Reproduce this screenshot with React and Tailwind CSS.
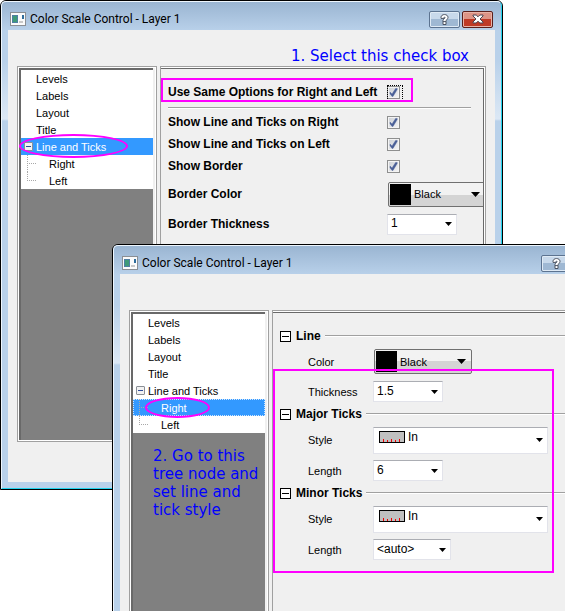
import React, { useId } from "react";

const TEXT = "font-['Liberation_Sans',Arial,sans-serif]";

function AppIcon() {
  return (
    <svg width="16" height="14" viewBox="0 0 16 14" shapeRendering="crispEdges" aria-hidden="true">
      <rect width="16" height="14" fill="#8b8f94" />
      <rect x="1" y="1" width="14" height="12" fill="#fbfbfb" />
      <rect x="2" y="3" width="6" height="8" fill="#4f7fa3" />
      <rect x="3" y="4" width="4" height="6" fill="#3f9a78" />
      <rect x="12" y="3" width="2" height="4" fill="#2f6d9c" />
      <rect x="9" y="9" width="4" height="2" fill="#c9c9c9" />
    </svg>
  );
}

function TitleBar({ title }) {
  return (
    <header className="flex h-7 shrink-0 items-center pl-2 pr-2 pt-1.5">
      <AppIcon />
      <h1 className="ml-1 flex-1 whitespace-nowrap font-['Roboto',sans-serif] text-[12px] leading-4 text-black">
        {title}
      </h1>
      <div className="flex gap-0.5">
        <button
          type="button"
          aria-label="Help"
          className="flex h-[17px] w-[31px] items-center justify-center rounded-xs border border-[#5c7390] bg-linear-to-b from-[#c8d9eb] from-50% to-[#9fb8d3] to-50% shadow-[inset_0_0_0_1px_#dfeaf5]"
        >
          <svg width="9" height="11" viewBox="0 0 9 11" aria-hidden="true">
            <path d="M1 3.4C1 -0.4 8 -0.4 8 3.4C8 5.2 6 5.6 6 7.4V10.5H3V6.4C3 5.4 5 4.6 5 3.6C5 2.8 4 2.8 4 4.4H1Z" fill="#fff" stroke="#4b5260" />
            <path d="M3 7.6H6" stroke="#4b5260" />
          </svg>
        </button>
        <button
          type="button"
          aria-label="Close"
          className="flex h-[17px] w-[31px] items-center justify-center rounded-xs border border-[#5a1f1b] bg-linear-to-b from-[#dd9486] from-50% to-[#bf3a26] to-50% shadow-[inset_0_0_0_1px_#e8b3a8]"
        >
          <svg width="12" height="10" viewBox="0 0 12 10" aria-hidden="true">
            <path d="M1 1H4.2L6 2.8L7.8 1H11V2L8 5L11 8V9H7.8L6 7.2L4.2 9H1V8L4 5L1 2Z" fill="#fff" stroke="#4b4350" />
          </svg>
        </button>
      </div>
    </header>
  );
}

function TreeItem({ label, selected = false, focused = false, child = false, last = false, expandable = false }) {
  return (
    <li className={`flex h-[17px] items-center ${selected ? "bg-[#3399ff] text-white" : "text-black"} ${focused ? "outline-1 -outline-offset-1 outline-dotted outline-[#cfe6ff]" : ""}`}>
      <span className={`flex h-full shrink-0 items-center ${child ? "w-7 pl-1.5" : "w-[15px] pl-[3px]"}`}>
        {expandable && (
          <button type="button" aria-label="Collapse" className="flex size-[9px] items-center justify-center rounded-[1px] border border-[#8a8f96] bg-[#f2f2f2]">
            <span className="h-px w-[5px] bg-[#2c4a9a]" />
          </button>
        )}
        {child && (
          <svg width="10" height="17" viewBox="0 0 10 17" aria-hidden="true">
            <path d={last ? "M0.5 0V9M2 8.5H9" : "M0.5 0V17M2 8.5H9"} stroke="#a8a8a8" strokeDasharray="1 1" />
          </svg>
        )}
      </span>
      <button type="button" className="whitespace-nowrap pt-px text-[11px] leading-4">{label}</button>
    </li>
  );
}

function TreePanel({ selected, ring, children }) {
  return (
    <nav aria-label="Pages" className="flex w-[140px] shrink-0 border border-[#a0a0a0] bg-white p-px">
      <div className="relative flex-1 border-l-2 border-t-2 border-[#696969] bg-[#808080]">
        <ul className="bg-white">
          <TreeItem label="Levels" />
          <TreeItem label="Labels" />
          <TreeItem label="Layout" />
          <TreeItem label="Title" />
          <TreeItem label="Line and Ticks" expandable selected={selected === "Line and Ticks"} />
          <TreeItem label="Right" child selected={selected === "Right"} focused={selected === "Right"} />
          <TreeItem label="Left" child last />
        </ul>
        <span className={`pointer-events-none absolute rounded-[50%] border-2 border-[#ff00ff] ${ring}`} />
        {children}
      </div>
      <div className="w-0.5 bg-[#f0f0f0]" />
    </nav>
  );
}

function Dialog({ title, place, note, tree, children }) {
  return (
    <section
      aria-label={title}
      className={`absolute flex h-[490px] w-[503px] flex-col rounded-t-md border border-black ${place} bg-[linear-gradient(to_bottom,#99b4d1,#b9d1ea_30px,#b9d1ea_60px,#dce8f5_118px,#b9d1ea_120px)]`}
    >
      <div className="flex min-h-0 flex-1 flex-col rounded-t-[5px] border border-b-[#22d3ee] border-l-[#eef6fd] border-r-[#22d3ee] border-t-[#eef6fd]">
        <TitleBar title={title} />
        <div className="mx-1.5 mb-1.5 flex min-h-0 flex-1 flex-col bg-[#f0f0f0] px-[9px] pb-10">
          <p className="flex h-9 shrink-0 items-end justify-end pb-px pr-[17px] font-['DejaVu_Sans',Verdana,sans-serif] text-[15px] leading-[18px] text-[#0000ff]">
            {note}
          </p>
          <div className="flex min-h-0 flex-1 gap-[3px]">
            {tree}
            <div className="min-w-0 flex-1 border border-[#a0a0a0] bg-white p-px pl-0">
              <div className="relative h-full overflow-hidden border-r border-t border-[#696969] bg-[#f0f0f0]">
                {children}
              </div>
            </div>
          </div>
        </div>
      </div>
    </section>
  );
}

function Arrow({ wide = false }) {
  return wide ? (
    <svg width="9" height="5" viewBox="0 0 9 5" aria-hidden="true" className="pointer-events-none"><path d="M0 0H9L4.5 5Z" /></svg>
  ) : (
    <svg width="7" height="4" viewBox="0 0 7 4" aria-hidden="true" className="pointer-events-none"><path d="M0 0H7L3.5 4Z" /></svg>
  );
}

function PlainSelect({ id, value, width }) {
  return (
    <span className={`grid h-[21px] items-center border border-[#e2e3ea] border-t-[#abadb3] bg-white ${width}`}>
      <select id={id} defaultValue={value} className="col-start-1 row-start-1 h-[19px] w-full appearance-none bg-transparent pb-0.5 pl-[3px] text-[12px] leading-4">
        <option>{value}</option>
      </select>
      <span className="pointer-events-none col-start-1 row-start-1 justify-self-end pr-1"><Arrow /></span>
    </span>
  );
}

function ColorSelect({ id }) {
  return (
    <span className="ml-px grid h-[25px] w-[98px] shrink-0 items-center rounded-xs border border-[#707070] bg-linear-to-b from-[#f2f2f2] from-50% to-[#d4d4d4] to-50%">
      <span className="pointer-events-none col-start-1 row-start-1 ml-px h-[21px] w-[21px] bg-black" />
      <select id={id} defaultValue="Black" className="col-start-1 row-start-1 h-[23px] w-full appearance-none bg-transparent pl-[25px] text-[11px] leading-4">
        <option>Black</option>
      </select>
      <span className="pointer-events-none col-start-1 row-start-1 justify-self-end pr-[5px]"><Arrow wide /></span>
    </span>
  );
}

function TickSelect({ id }) {
  return (
    <span className="grid h-[27px] w-[175px] items-center border border-[#e2e3ea] border-t-[#abadb3] bg-white">
      <svg width="26" height="12" viewBox="0 0 26 12" shapeRendering="crispEdges" aria-hidden="true" className="pointer-events-none col-start-1 row-start-1 mb-1.5 ml-[5px]">
        <rect width="26" height="12" fill="#000" />
        <rect x="1" y="1" width="24" height="10" fill="#c0c0c0" />
        <g fill="#f00000">
          <rect x="4" y="8" width="1" height="3" />
          <rect x="8" y="9" width="1" height="2" />
          <rect x="12" y="8" width="1" height="3" />
          <rect x="16" y="9" width="1" height="2" />
          <rect x="20" y="8" width="1" height="3" />
        </g>
      </svg>
      <select id={id} defaultValue="In" className="col-start-1 row-start-1 h-[25px] w-full appearance-none bg-transparent pb-1.5 pl-[34px] text-[12px] leading-4">
        <option>In</option>
      </select>
      <span className="pointer-events-none col-start-1 row-start-1 justify-self-end pr-1"><Arrow /></span>
    </span>
  );
}

function CheckRow({ label, height, focus = false }) {
  const id = useId();
  return (
    <div className={`flex items-center ${height}`}>
      <label htmlFor={id} className="w-[219px] whitespace-nowrap text-[12px] font-bold leading-4">{label}</label>
      <span className="relative grid size-[13px]">
        <input
          id={id}
          type="checkbox"
          defaultChecked
          className="peer col-start-1 row-start-1 size-[13px] appearance-none border border-[#8e8f8f] bg-linear-to-br from-[#cbcfd5] to-[#f6f6f6] shadow-[inset_0_0_0_1px_#f4f4f4]"
        />
        <svg width="13" height="13" viewBox="0 0 13 13" aria-hidden="true" className="pointer-events-none invisible col-start-1 row-start-1 peer-checked:visible">
          <path d="M3 6L5 8L8.6 2.4L10.2 2.4V3.6L6 10.4H5L3 7.8Z" fill="#4a5f97" stroke="#4a5f97" strokeWidth="0.4" />
        </svg>
        {focus && <span className="pointer-events-none absolute -top-px left-0 size-4 border border-dotted border-black" />}
      </span>
    </div>
  );
}

function SelectRow({ label, children }) {
  const id = useId();
  return (
    <div className="flex h-[30px] items-center">
      <label htmlFor={id} className="w-[219px] shrink-0 whitespace-nowrap text-[12px] font-bold leading-4">{label}</label>
      {children(id)}
    </div>
  );
}

function Group({ title, children }) {
  return (
    <section>
      <div className="flex h-[18px] items-center">
        <button type="button" aria-label={`Collapse ${title}`} className="flex size-[11px] shrink-0 items-center justify-center border border-black bg-white">
          <span className="h-px w-[7px] bg-black" />
        </button>
        <h2 className="ml-[5px] mr-1 whitespace-nowrap text-[12px] font-bold leading-4">{title}</h2>
        <div className="h-0.5 flex-1 border-t border-[#a0a0a0] bg-white" />
      </div>
      {children}
    </section>
  );
}

function Field({ label, height = "h-[27px]", children }) {
  const id = useId();
  return (
    <div className={`flex items-center pl-7 ${height}`}>
      <label htmlFor={id} className="w-[65px] shrink-0 text-[11px] leading-4">{label}</label>
      {children(id)}
    </div>
  );
}

export default function App() {
  return (
    <main className={`relative h-screen overflow-hidden bg-white text-black ${TEXT}`}>
      <Dialog
        title="Color Scale Control - Layer 1"
        place="left-0 top-0"
        note="1. Select this check box"
        tree={<TreePanel selected="Line and Ticks" ring="-left-0.5 top-[64px] h-6 w-[109px]" />}
      >
        <div className="pl-[7px] pt-3">
          <CheckRow label="Use Same Options for Right and Left" height="h-[22px]" focus />
          <div className="mb-0.5 mr-3 mt-1 h-0.5 border-t border-[#a0a0a0] bg-white" />
          <CheckRow label="Show Line and Ticks on Right" height="h-[22px]" />
          <CheckRow label="Show Line and Ticks on Left" height="h-[22px]" />
          <CheckRow label="Show Border" height="h-[22px]" />
          <div className="pt-0.5">
            <SelectRow label="Border Color">{(id) => <ColorSelect id={id} />}</SelectRow>
            <SelectRow label="Border Thickness">{(id) => <PlainSelect id={id} value="1" width="w-[70px]" />}</SelectRow>
          </div>
        </div>
        <span className="pointer-events-none absolute left-0 top-[9px] h-6 w-[252px] border-2 border-[#ff00ff]" />
      </Dialog>

      <Dialog
        title="Color Scale Control - Layer 1"
        place="left-28 top-[244px]"
        note=""
        tree={
          <TreePanel selected="Right" ring="left-3 top-[83px] h-[21px] w-[65px]">
            <p className="whitespace-nowrap pl-5 pt-3.5 font-['DejaVu_Sans',Verdana,sans-serif] text-[15px] leading-[18px] text-[#0000ff]">
              2. Go to this
              <br />
              tree node and
              <br />
              set line and
              <br />
              tick style
            </p>
          </TreePanel>
        }
      >
        <div className="pl-[7px] pt-3.5">
          <Group title="Line">
            <Field label="Color" height="h-[33px]">{(id) => <ColorSelect id={id} />}</Field>
            <Field label="Thickness">{(id) => <PlainSelect id={id} value="1.5" width="w-[70px]" />}</Field>
          </Group>
          <Group title="Major Ticks">
            <Field label="Style" height="h-[34px]">{(id) => <TickSelect id={id} />}</Field>
            <Field label="Length">{(id) => <PlainSelect id={id} value="6" width="w-[70px]" />}</Field>
          </Group>
          <Group title="Minor Ticks">
            <Field label="Style" height="h-[34px]">{(id) => <TickSelect id={id} />}</Field>
            <Field label="Length">{(id) => <PlainSelect id={id} value="<auto>" width="w-[78px]" />}</Field>
          </Group>
        </div>
        <span className="pointer-events-none absolute left-0 top-14 h-[204px] w-[281px] border-2 border-[#ff00ff]" />
      </Dialog>
    </main>
  );
}
